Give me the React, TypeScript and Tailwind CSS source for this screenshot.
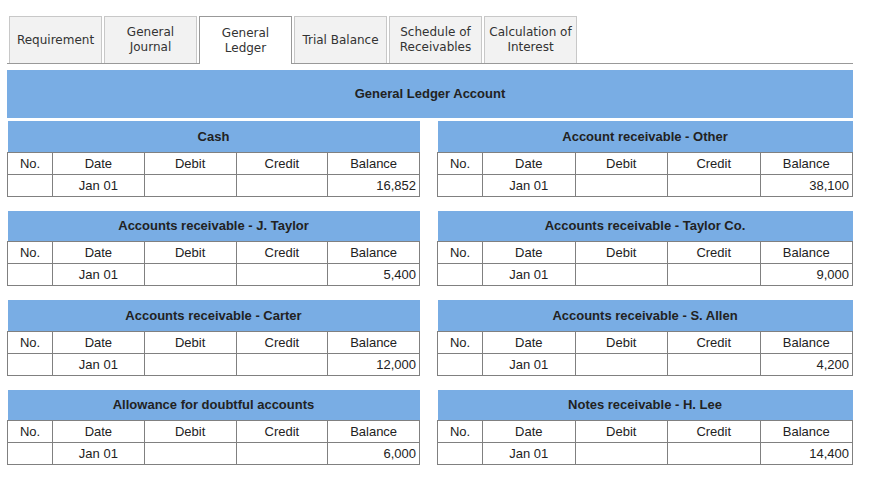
import React from 'react'

const tabs = [
  { label: ['Requirement'], active: false },
  { label: ['General', 'Journal'], active: false },
  { label: ['General', 'Ledger'], active: true },
  { label: ['Trial Balance'], active: false },
  { label: ['Schedule of', 'Receivables'], active: false },
  { label: ['Calculation of', 'Interest'], active: false },
]

const accounts = [
  { title: 'Cash', balance: '16,852' },
  { title: 'Account receivable - Other', balance: '38,100' },
  { title: 'Accounts receivable - J. Taylor', balance: '5,400' },
  { title: 'Accounts receivable - Taylor Co.', balance: '9,000' },
  { title: 'Accounts receivable - Carter', balance: '12,000' },
  { title: 'Accounts receivable - S. Allen', balance: '4,200' },
  { title: 'Allowance for doubtful accounts', balance: '6,000' },
  { title: 'Notes receivable - H. Lee', balance: '14,400' },
]

function LedgerTable({ title, balance }: { title: string; balance: string }) {
  const cell = 'border border-[#808080] p-0 leading-[15px]'
  return (
    <table className="w-full table-fixed border-collapse text-[13px] text-[#222]">
      <colgroup>
        <col className="w-[45px]" />
        <col />
        <col />
        <col />
        <col />
      </colgroup>
      <thead>
        <tr className="h-[31px] bg-[#79ade4]">
          <th colSpan={5} className="text-center font-bold">
            {title}
          </th>
        </tr>
        <tr className="h-[22px]">
          <th className={`${cell} font-normal text-center`}>No.</th>
          <th className={`${cell} font-normal text-center`}>Date</th>
          <th className={`${cell} font-normal text-center`}>Debit</th>
          <th className={`${cell} font-normal text-center`}>Credit</th>
          <th className={`${cell} font-normal text-center`}>Balance</th>
        </tr>
      </thead>
      <tbody>
        <tr className="h-[22px]">
          <td className={cell}></td>
          <td className={`${cell} text-center`}>Jan 01</td>
          <td className={cell}></td>
          <td className={cell}></td>
          <td className={`${cell} text-right pr-[3px]`}>{balance}</td>
        </tr>
      </tbody>
    </table>
  )
}

export default function App() {
  return (
    <div className="min-h-[480px] bg-white pt-[16px] font-['Liberation_Sans',Arial,sans-serif]">
      <div className="ml-[7px] w-[846px]">
        <div className="flex h-[48px] items-stretch gap-[2px] border-b border-[#999] pl-[2px]">
          {tabs.map((t) => (
            <div
              key={t.label.join(' ')}
              className={
                t.active
                  ? "-mb-px flex w-[93px] flex-col items-center justify-center border border-b-0 border-[#999] bg-white text-[12px] leading-[15px] text-[#333] font-['DejaVu_Sans',Verdana,sans-serif]"
                  : "flex w-[93px] flex-col items-center justify-center border border-b-0 border-[#c8c8c8] bg-[#f2f2f2] text-[12px] leading-[15px] text-[#333] font-['DejaVu_Sans',Verdana,sans-serif]"
              }
            >
              {t.label.map((l) => (
                <span key={l} className="whitespace-nowrap">
                  {l}
                </span>
              ))}
            </div>
          ))}
        </div>
        <div className="mt-[6px] flex h-[48px] items-center justify-center bg-[#79ade4] text-[13px] font-bold text-[#222]">
          General Ledger Account
        </div>
        <div className="mt-[3px] grid grid-cols-[413px_416px] gap-x-[17px] gap-y-[14px]">
          {accounts.map((a) => (
            <LedgerTable key={a.title} title={a.title} balance={a.balance} />
          ))}
        </div>
      </div>
    </div>
  )
}
